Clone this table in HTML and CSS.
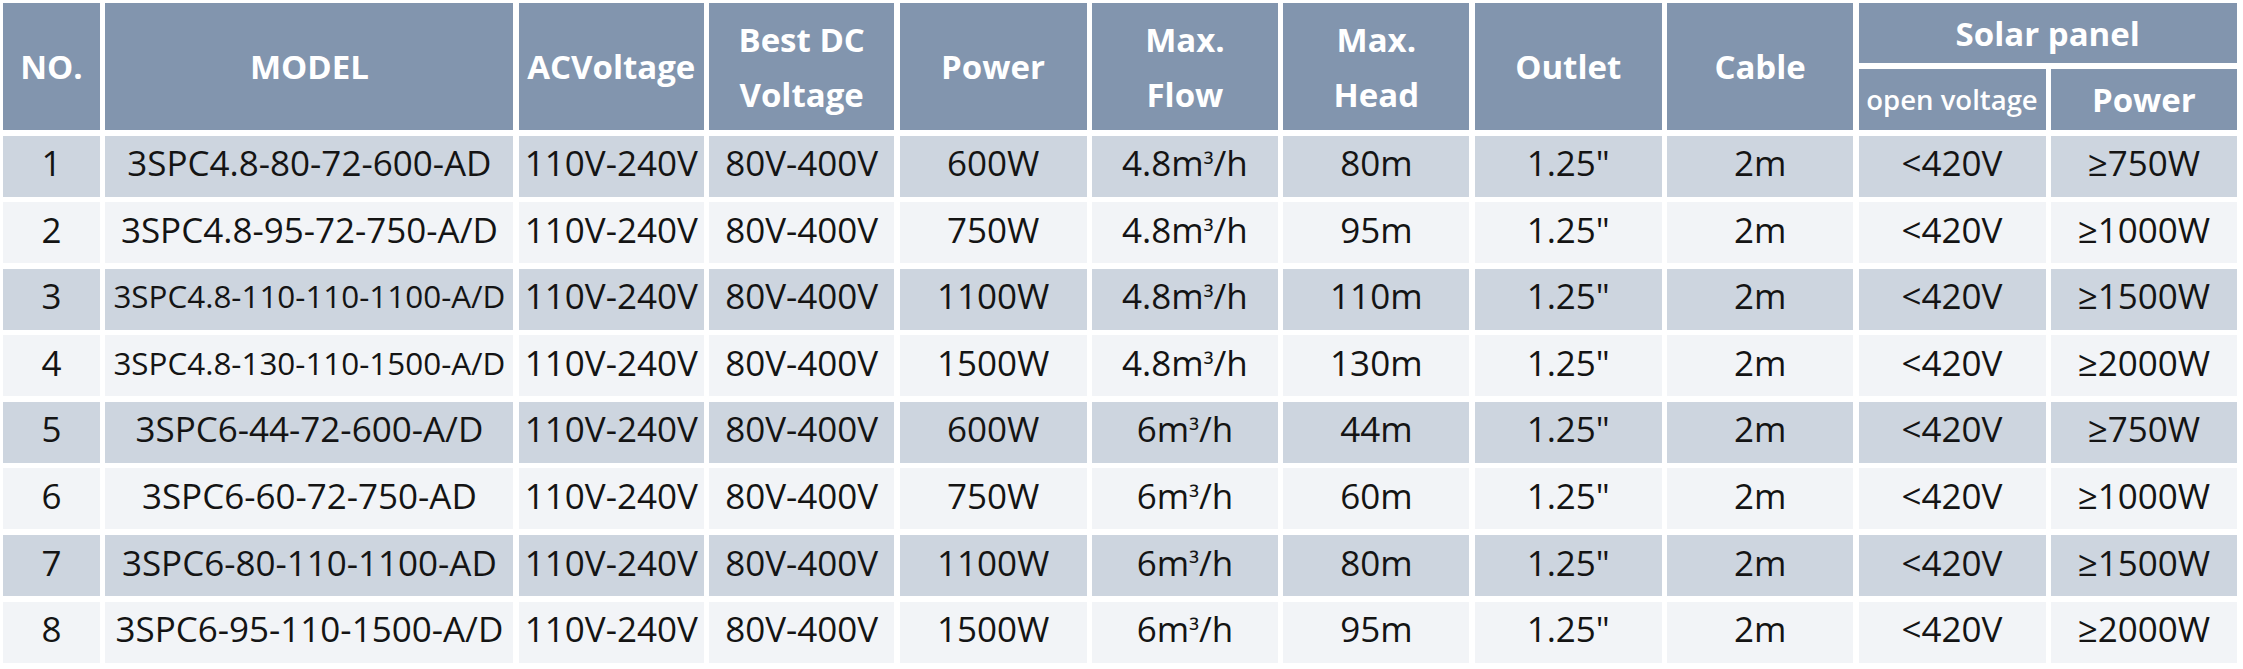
FILE: index.html
```html
<!DOCTYPE html>
<html lang="en">
<head>
<meta charset="utf-8">
<title>3SPC Solar Pump Specifications</title>
<link rel="stylesheet" href="styles.css">
</head>
<body>
<div class="spec">
  <div class="hd c-no span-rows">NO.</div>
  <div class="hd span-rows">MODEL</div>
  <div class="hd span-rows">ACVoltage</div>
  <div class="hd span-rows">Best DC<br>Voltage</div>
  <div class="hd span-rows">Power</div>
  <div class="hd span-rows">Max.<br>Flow</div>
  <div class="hd span-rows">Max.<br>Head</div>
  <div class="hd span-rows">Outlet</div>
  <div class="hd span-rows">Cable</div>
  <div class="hd span-cols">Solar panel</div>
  <div class="hd sub-small">open voltage</div>
  <div class="hd">Power</div>

  <div class="td odd">1</div><div class="td odd">3SPC4.8-80-72-600-AD</div><div class="td odd">110V-240V</div><div class="td odd">80V-400V</div><div class="td odd">600W</div><div class="td odd">4.8m<span class="sup">³</span>/h</div><div class="td odd">80m</div><div class="td odd">1.25"</div><div class="td odd">2m</div><div class="td odd">&lt;420V</div><div class="td odd">≥750W</div>

  <div class="td even">2</div><div class="td even">3SPC4.8-95-72-750-A/D</div><div class="td even">110V-240V</div><div class="td even">80V-400V</div><div class="td even">750W</div><div class="td even">4.8m<span class="sup">³</span>/h</div><div class="td even">95m</div><div class="td even">1.25"</div><div class="td even">2m</div><div class="td even">&lt;420V</div><div class="td even">≥1000W</div>

  <div class="td odd">3</div><div class="td odd fit">3SPC4.8-110-110-1100-A/D</div><div class="td odd">110V-240V</div><div class="td odd">80V-400V</div><div class="td odd">1100W</div><div class="td odd">4.8m<span class="sup">³</span>/h</div><div class="td odd">110m</div><div class="td odd">1.25"</div><div class="td odd">2m</div><div class="td odd">&lt;420V</div><div class="td odd">≥1500W</div>

  <div class="td even">4</div><div class="td even fit">3SPC4.8-130-110-1500-A/D</div><div class="td even">110V-240V</div><div class="td even">80V-400V</div><div class="td even">1500W</div><div class="td even">4.8m<span class="sup">³</span>/h</div><div class="td even">130m</div><div class="td even">1.25"</div><div class="td even">2m</div><div class="td even">&lt;420V</div><div class="td even">≥2000W</div>

  <div class="td odd">5</div><div class="td odd">3SPC6-44-72-600-A/D</div><div class="td odd">110V-240V</div><div class="td odd">80V-400V</div><div class="td odd">600W</div><div class="td odd">6m<span class="sup">³</span>/h</div><div class="td odd">44m</div><div class="td odd">1.25"</div><div class="td odd">2m</div><div class="td odd">&lt;420V</div><div class="td odd">≥750W</div>

  <div class="td even">6</div><div class="td even">3SPC6-60-72-750-AD</div><div class="td even">110V-240V</div><div class="td even">80V-400V</div><div class="td even">750W</div><div class="td even">6m<span class="sup">³</span>/h</div><div class="td even">60m</div><div class="td even">1.25"</div><div class="td even">2m</div><div class="td even">&lt;420V</div><div class="td even">≥1000W</div>

  <div class="td odd">7</div><div class="td odd">3SPC6-80-110-1100-AD</div><div class="td odd">110V-240V</div><div class="td odd">80V-400V</div><div class="td odd">1100W</div><div class="td odd">6m<span class="sup">³</span>/h</div><div class="td odd">80m</div><div class="td odd">1.25"</div><div class="td odd">2m</div><div class="td odd">&lt;420V</div><div class="td odd">≥1500W</div>

  <div class="td even">8</div><div class="td even">3SPC6-95-110-1500-A/D</div><div class="td even">110V-240V</div><div class="td even">80V-400V</div><div class="td even">1500W</div><div class="td even">6m<span class="sup">³</span>/h</div><div class="td even">95m</div><div class="td even">1.25"</div><div class="td even">2m</div><div class="td even">&lt;420V</div><div class="td even">≥2000W</div>
</div>
</body>
</html>
```

FILE: styles.css
```css
html, body {
  margin: 0;
  padding: 0;
  background: #ffffff;
}

body {
  padding: 3px 0 0 3px;
  font-family: "Open Sans", "Noto Sans", "DejaVu Sans", sans-serif;
}

.spec {
  display: grid;
  grid-template-columns: 97px 408px 185px 185px 187px 186px 186px 187px 186px 187px 186px;
  grid-template-rows: 60px 61.5px repeat(8, 61px);
  column-gap: 5.4px;
  row-gap: 5.57px;
  width: max-content;
}

.hd,
.td {
  display: flex;
  align-items: center;
  justify-content: center;
  text-align: center;
  white-space: nowrap;
}

.hd {
  background: #8295ae;
  color: #ffffff;
  font-weight: 700;
  font-size: 33px;
  line-height: 55px;
}

.span-rows {
  grid-row: span 2;
}

.span-cols {
  grid-column: span 2;
}

.sub-small {
  font-size: 27.5px;
  font-weight: 600;
}

.td {
  color: #141414;
  font-size: 35px;
  line-height: 1.2;
  padding-bottom: 6px;
  box-sizing: border-box;
}

.td.odd {
  background: #cdd5df;
}

.td.even {
  background: #f2f4f7;
}

.td.fit {
  font-size: 31.4px;
}

.sup {
  font-size: 0.8em;
  line-height: 1;
  position: relative;
  top: 0.03em;
}
```
